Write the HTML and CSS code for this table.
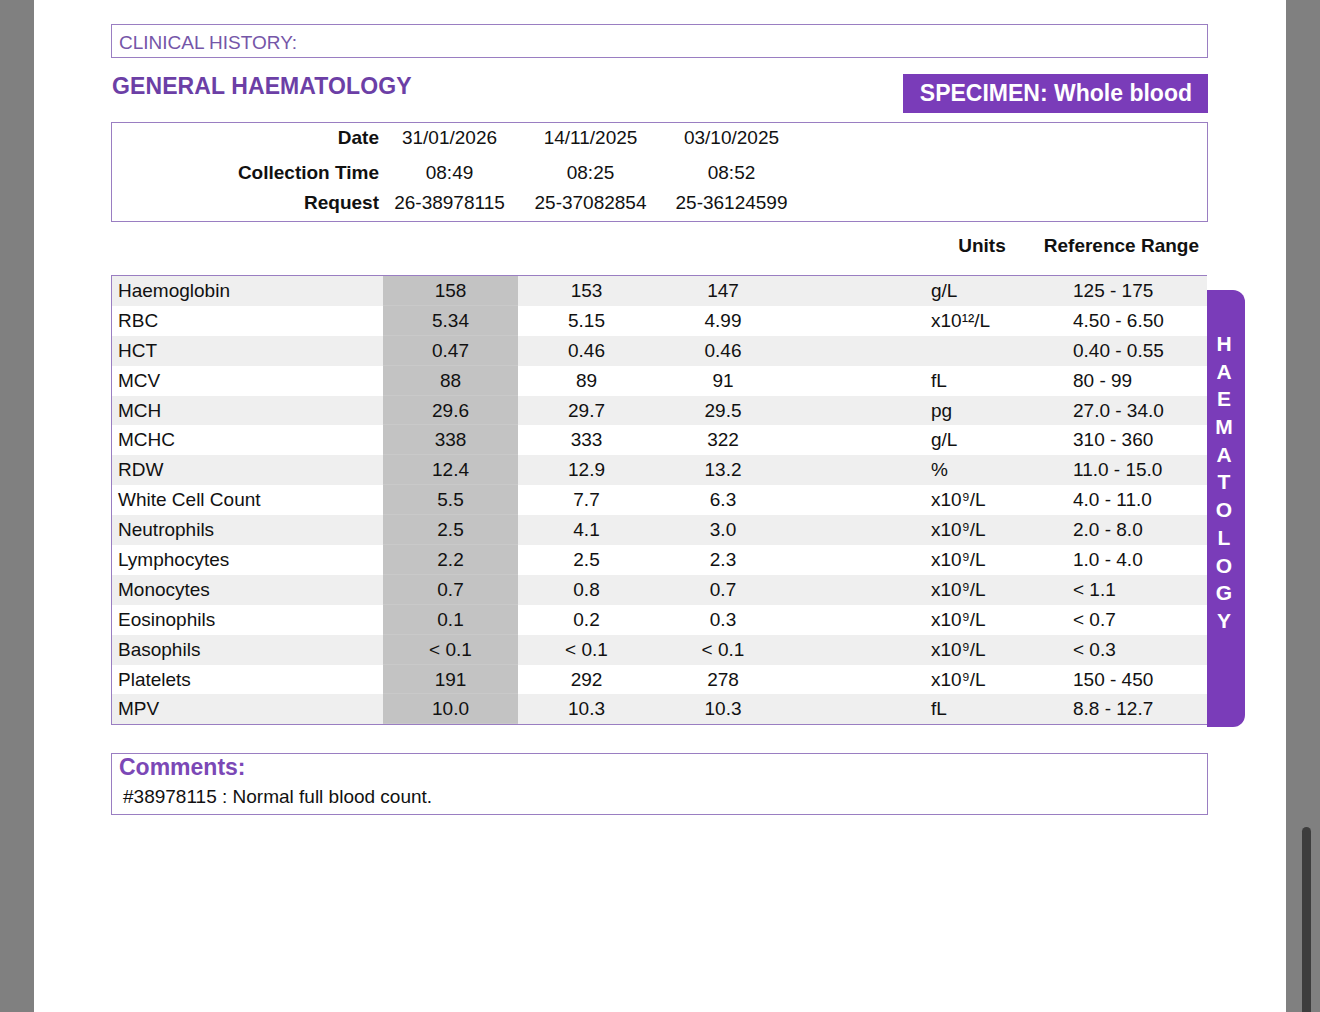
FILE: index.html
```html
<!DOCTYPE html>
<html>
<head>
<meta charset="utf-8">
<link rel="stylesheet" href="styles.css">
</head>
<body>
<div class="page">
  <div class="clinical">CLINICAL HISTORY:</div>
  <div class="head-row">
    <h1 class="title">GENERAL HAEMATOLOGY</h1>
    <div class="specimen">SPECIMEN: Whole blood</div>
  </div>
  <div class="dates">
    <div class="drow r1"><span class="dlabel">Date</span><span class="dval">31/01/2026</span><span class="dval">14/11/2025</span><span class="dval">03/10/2025</span></div>
    <div class="drow r2"><span class="dlabel">Collection Time</span><span class="dval">08:49</span><span class="dval">08:25</span><span class="dval">08:52</span></div>
    <div class="drow r3"><span class="dlabel">Request</span><span class="dval">26-38978115</span><span class="dval">25-37082854</span><span class="dval">25-36124599</span></div>
  </div>
  <div class="col-head"><span>Units</span><span>Reference Range</span></div>
  <div class="results-wrap">
    <div class="results">
      <div class="row"><span class="name">Haemoglobin</span><span class="v cur">158</span><span class="v">153</span><span class="v">147</span><span class="unit">g/L</span><span class="ref">125 - 175</span></div>
      <div class="row"><span class="name">RBC</span><span class="v cur">5.34</span><span class="v">5.15</span><span class="v">4.99</span><span class="unit">x10¹²/L</span><span class="ref">4.50 - 6.50</span></div>
      <div class="row"><span class="name">HCT</span><span class="v cur">0.47</span><span class="v">0.46</span><span class="v">0.46</span><span class="unit"></span><span class="ref">0.40 - 0.55</span></div>
      <div class="row"><span class="name">MCV</span><span class="v cur">88</span><span class="v">89</span><span class="v">91</span><span class="unit">fL</span><span class="ref">80 - 99</span></div>
      <div class="row"><span class="name">MCH</span><span class="v cur">29.6</span><span class="v">29.7</span><span class="v">29.5</span><span class="unit">pg</span><span class="ref">27.0 - 34.0</span></div>
      <div class="row"><span class="name">MCHC</span><span class="v cur">338</span><span class="v">333</span><span class="v">322</span><span class="unit">g/L</span><span class="ref">310 - 360</span></div>
      <div class="row"><span class="name">RDW</span><span class="v cur">12.4</span><span class="v">12.9</span><span class="v">13.2</span><span class="unit">%</span><span class="ref">11.0 - 15.0</span></div>
      <div class="row"><span class="name">White Cell Count</span><span class="v cur">5.5</span><span class="v">7.7</span><span class="v">6.3</span><span class="unit">x10⁹/L</span><span class="ref">4.0 - 11.0</span></div>
      <div class="row"><span class="name">Neutrophils</span><span class="v cur">2.5</span><span class="v">4.1</span><span class="v">3.0</span><span class="unit">x10⁹/L</span><span class="ref">2.0 - 8.0</span></div>
      <div class="row"><span class="name">Lymphocytes</span><span class="v cur">2.2</span><span class="v">2.5</span><span class="v">2.3</span><span class="unit">x10⁹/L</span><span class="ref">1.0 - 4.0</span></div>
      <div class="row"><span class="name">Monocytes</span><span class="v cur">0.7</span><span class="v">0.8</span><span class="v">0.7</span><span class="unit">x10⁹/L</span><span class="ref">&lt; 1.1</span></div>
      <div class="row"><span class="name">Eosinophils</span><span class="v cur">0.1</span><span class="v">0.2</span><span class="v">0.3</span><span class="unit">x10⁹/L</span><span class="ref">&lt; 0.7</span></div>
      <div class="row"><span class="name">Basophils</span><span class="v cur">&lt; 0.1</span><span class="v">&lt; 0.1</span><span class="v">&lt; 0.1</span><span class="unit">x10⁹/L</span><span class="ref">&lt; 0.3</span></div>
      <div class="row"><span class="name">Platelets</span><span class="v cur">191</span><span class="v">292</span><span class="v">278</span><span class="unit">x10⁹/L</span><span class="ref">150 - 450</span></div>
      <div class="row"><span class="name">MPV</span><span class="v cur">10.0</span><span class="v">10.3</span><span class="v">10.3</span><span class="unit">fL</span><span class="ref">8.8 - 12.7</span></div>
    </div>
    <div class="tab"><span>H</span><span>A</span><span>E</span><span>M</span><span>A</span><span>T</span><span>O</span><span>L</span><span>O</span><span>G</span><span>Y</span></div>
  </div>
  <div class="comments">
    <div class="c-title">Comments:</div>
    <div class="c-text">#38978115 : Normal full blood count.</div>
  </div>
</div>
<div class="scroll-thumb"></div>
</body>
</html>
```

FILE: styles.css
```css
html, body {
  margin: 0;
  padding: 0;
}
body {
  background: #808080;
  font-family: "Liberation Sans", Arial, sans-serif;
  color: #111;
  overflow: hidden;
}
.page {
  background: #fff;
  margin: 0 34px;
  height: 1012px;
  padding: 24px 78px 0 77px;
  box-sizing: border-box;
}
.clinical {
  border: 1px solid #9a7ec2;
  height: 32px;
  line-height: 35px;
  padding-left: 7px;
  font-size: 19px;
  color: #7556a8;
}
.head-row {
  display: flex;
  justify-content: space-between;
  align-items: flex-start;
  padding-top: 16px;
}
.title {
  margin: 0;
  margin-left: 1px;
  font-size: 23px;
  line-height: 24px;
  font-weight: bold;
  color: #6c3fa6;
  letter-spacing: 0.1px;
}
.specimen {
  background: #7a3cb9;
  color: #fff;
  font-size: 23px;
  font-weight: bold;
  line-height: 39px;
  height: 39px;
  padding: 0 16px 0 17px;
}
.dates {
  margin-top: 9px;
  border: 1px solid #9a7ec2;
  padding: 4px 0 7px 0;
  height: 100px;
  box-sizing: border-box;
}
.drow {
  display: grid;
  grid-template-columns: 267px 141px 141px 141px;
  line-height: 22px;
  font-size: 19px;
}
.drow.r2 { margin-top: 13px; }
.drow.r3 { margin-top: 8px; }
.dlabel {
  text-align: right;
  font-weight: bold;
}
.dval {
  text-align: center;
}
.col-head {
  display: flex;
  justify-content: flex-end;
  gap: 38px;
  padding-right: 9px;
  margin-top: 13px;
  font-size: 19px;
  font-weight: bold;
  line-height: 22px;
}
.results-wrap {
  display: flex;
  align-items: stretch;
  margin-top: 18px;
  margin-right: -37px;
}
.results {
  flex: 1;
  border-top: 1px solid #9a7ec2;
  border-left: 1px solid #9a7ec2;
  border-bottom: 1px solid #9a7ec2;
}
.row {
  display: grid;
  grid-template-columns: 271px 135px 137px 136px 282px 1fr;
  height: 29.9px;
  line-height: 29.9px;
  font-size: 19px;
}
.row:nth-child(odd) {
  background: #efefef;
}
.name {
  padding-left: 6px;
}
.v {
  text-align: center;
}
.v.cur {
  background: #c3c3c3;
  box-shadow: inset 0 -1px 0 #c9c9c9;
}
.unit {
  padding-left: 140px;
}
.tab {
  width: 38px;
  margin-top: 15px;
  margin-bottom: -2px;
  background: #7a3cb9;
  border-radius: 0 12px 12px 0;
  color: #fff;
  font-weight: bold;
  font-size: 21px;
  display: flex;
  flex-direction: column;
  align-items: center;
  padding-top: 40px;
  box-sizing: border-box;
}
.tab span {
  line-height: 27.7px;
  height: 27.7px;
  margin-left: -4px;
}
.comments {
  margin-top: 28px;
  border: 1px solid #9a7ec2;
  padding-bottom: 6px;
}
.c-title {
  padding-left: 7px;
  font-size: 23px;
  font-weight: bold;
  line-height: 26px;
  color: #7b48b6;
}
.c-text {
  margin-top: 6px;
  padding-left: 11px;
  font-size: 19px;
  line-height: 22px;
}
.scroll-thumb {
  position: absolute;
  left: 1302px;
  top: 827px;
  width: 9px;
  height: 200px;
  background: #3d3d3d;
  border-radius: 5px 5px 0 0;
}
```
